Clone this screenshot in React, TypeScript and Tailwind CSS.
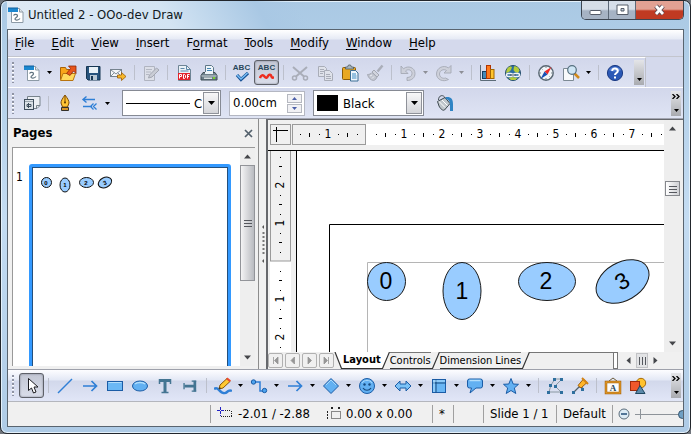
import type { ReactNode } from "react";

const BLUE = "#2f7fd6";

function Icon({ children, size = 18 }: { children: ReactNode; size?: number }) {
  return (
    <svg width={size} height={size} viewBox="0 0 18 18" fill="none" aria-hidden="true" className="shrink-0">
      {children}
    </svg>
  );
}

function ToolButton({ label, pressed, children }: { label: string; pressed?: boolean; children: ReactNode }) {
  const look = pressed
    ? "rounded-[3px] border border-[#5d6068] bg-linear-to-b from-[#c3c7d4] to-[#dadeea] shadow-[inset_0_0_2px_#777b88]"
    : "";
  return (
    <button type="button" aria-label={label} className={`flex h-[25px] w-[25px] shrink-0 items-center justify-center ${look}`}>
      {children}
    </button>
  );
}

function Drop({ label, muted }: { label: string; muted?: boolean }) {
  return (
    <button type="button" aria-label={label} className="flex h-[25px] w-[11px] shrink-0 items-center justify-center">
      <svg width="5" height="3" viewBox="0 0 5 3" aria-hidden="true">
        <path d="M0 0h5L2.5 3z" fill={muted ? "#8d8f96" : "#000"} />
      </svg>
    </button>
  );
}

function Sep() {
  return (
    <span className="flex w-2 shrink-0 justify-center">
      <span className="h-[15px] w-px bg-[#bcc0cc]" />
    </span>
  );
}

function Grip() {
  return (
    <span className="mr-[5px] ml-1 h-[21px] w-[2px] shrink-0 bg-[repeating-linear-gradient(to_bottom,#8e93a3_0_2px,#fff_2px_3px,transparent_3px_4px)]" />
  );
}

function Overflow({ chevrons }: { chevrons?: boolean }) {
  return (
    <button
      type="button"
      aria-label="Toolbar options"
      className="flex h-[25px] w-[10px] shrink-0 flex-col items-center justify-between bg-linear-to-b from-[#e4e5e8] to-[#a9abb0] pt-[3px] pb-1"
    >
      {chevrons ? (
        <svg width="8" height="5" viewBox="0 0 8 5" fill="none" stroke="#000" strokeWidth="1.3" aria-hidden="true">
          <path d="M.5 0L3 2.5.5 5M4.500 0L7 2.500 4.500 5" />
        </svg>
      ) : (
        <span />
      )}
      <svg width="5" height="3" viewBox="0 0 5 3" aria-hidden="true">
        <path d="M0 0h5L2.500 3z" />
      </svg>
    </button>
  );
}

/* ---------- toolbar drawings ---------- */

const DrawDoc = () => (
  <Icon>
    <path d="M4.500 2.500h8l3.500 3.500v10.500H4.500z" fill="#fff" stroke="#8c9aa6" />
    <path d="M12.500 2.500V6H16" fill="#e3e8ec" stroke="#8c9aa6" />
    <rect x="1" y="2" width="10" height="4" fill="#1c87cf" />
    <path d="M1 2h10" stroke="#0f5f9c" />
    <path d="M6.500 9.500c1-1.500 4-1.500 4 .3 0 1.700-2.500 1.500-2.500 3.200 0 1.500 3.500 1.500 5-.5" stroke="#60737f" strokeWidth="1.200" />
  </Icon>
);
const OpenIcon = () => (
  <Icon>
    <path d="M1.500 3.500h5l1 2h3v10h-9z" fill="#f9a51a" stroke="#a86208" />
    <path d="M1.500 16.500l2.500-7h12.500l-2.500 7z" fill="#ffd85c" stroke="#b87410" />
    <path d="M7.500 9.500l4-5L9.500 2h7.500v7.500L14.500 7l-3.500 4.500z" fill="#e8551a" stroke="#8d2a07" strokeWidth=".8" />
  </Icon>
);
const SaveIcon = () => (
  <Icon>
    <path d="M2.500 2.500h13.500v13.500h-12l-1.500-1.500z" fill="#27537c" stroke="#173652" />
    <rect x="5" y="3" width="9" height="6" fill="#e9f1f6" />
    <rect x="6" y="11" width="7" height="5" fill="#b9c8d4" />
    <rect x="7" y="12" width="2" height="4" fill="#173652" />
  </Icon>
);
const MailIcon = () => (
  <Icon>
    <rect x="1.500" y="5.500" width="11" height="7" fill="#f5f7f9" stroke="#76838e" />
    <path d="M2 6l5 4 5-4M2 12l3.500-3.500M12 12L8.500 8.500" stroke="#76838e" strokeWidth=".9" />
    <path d="M8.500 11h4V8.500l4.500 4-4.500 4V14h-4z" fill="#f8b92c" stroke="#9c5e08" strokeWidth=".8" />
  </Icon>
);
const EditIcon = () => (
  <Icon>
    <path d="M2.500 2.500h10v14h-10z" fill="#dcdfe8" stroke="#b0b4c0" />
    <path d="M4 5.500h6M4 8h5M4 10.500h3" stroke="#b4b8c3" />
    <path d="M6.500 14l1-3 7-7 2.500 2-7 7z" fill="#c9ccd5" stroke="#a3a7b2" />
  </Icon>
);
const PdfIcon = () => (
  <Icon>
    <path d="M3.500 1.500h8l4 4v11h-12z" fill="#eaf1f7" stroke="#6f8595" />
    <path d="M11.500 1.500v4h4M5.500 4.500h4M5.500 7h8" stroke="#5f89a9" />
    <rect x="3" y="9" width="12" height="7" fill="#e2232b" />
    <path d="M4.500 14.500v-4h2v2h-2M8.500 10.500v4h1l1-1v-2l-1-1zM12.500 14.500v-4h2M12.500 12.500h1.500" stroke="#fff" />
  </Icon>
);
const PrintIcon = () => (
  <Icon>
    <path d="M5.500 1.500h6l2 2v6h-8z" fill="#eef5fa" stroke="#607888" />
    <path d="M7 4.500h4M7 6.500h5" stroke="#4587b4" />
    <path d="M3 8.500h12l2 3v4.500H1v-4.500z" fill="#6d7f8a" stroke="#3f4e57" />
    <rect x="5" y="8" width="8" height="2" fill="#eef5fa" />
    <path d="M1.500 12h15" stroke="#c9d3d8" />
    <rect x="4" y="13.500" width="8" height="1.500" fill="#d6dde0" />
    <rect x="13" y="13" width="2" height="2" fill="#76d32a" />
  </Icon>
);
function AbcIcon({ wave }: { wave?: boolean }) {
  return (
    <span className="flex h-[18px] w-[18px] flex-col items-center">
      <span className="h-2 font-['Liberation_Sans'] text-[8px] leading-2 font-bold text-[#29465a]">ABC</span>
      {wave ? (
        <svg width="16" height="8" viewBox="0 0 16 8" fill="none" aria-hidden="true">
          <path d="M1 6c1-3 3-3.500 4.500-1.500s2.500 1.500 3.500-.5 3-1.500 3.500.5 1.500 1 2.500 1" stroke="#ed2d1f" strokeWidth="2.500" />
        </svg>
      ) : (
        <svg width="14" height="10" viewBox="0 0 14 10" fill="none" aria-hidden="true">
          <path d="M2 3l4 4.500L13 1" stroke="#175296" strokeWidth="3.200" />
          <path d="M2 3l4 4L12.500 1" stroke="#7cc0f7" strokeWidth="1.500" />
        </svg>
      )}
    </span>
  );
}
const CutIcon = () => (
  <Icon>
    <path d="M2 3l11 9.500M16 3L5 12.500" stroke="#a9adb8" strokeWidth="2" />
    <circle cx="3.500" cy="14" r="2" stroke="#a9adb8" strokeWidth="1.500" />
    <circle cx="14.500" cy="14" r="2" stroke="#a9adb8" strokeWidth="1.500" />
  </Icon>
);
const CopyIcon = () => (
  <Icon>
    <path d="M2.500 2.500h6l2 2v8h-8z" fill="#dfe2ea" stroke="#a9adb8" />
    <path d="M4 5.500h4M4 7.500h4M4 9.500h3" stroke="#a9adb8" />
    <path d="M8.500 6.500h5l3 3v7h-8z" fill="#dfe2ea" stroke="#a9adb8" />
    <path d="M10 10.500h4M10 12.500h5M10 14.500h5" stroke="#a9adb8" />
  </Icon>
);
const PasteIcon = () => (
  <Icon>
    <rect x="1.500" y="3.500" width="13" height="12" rx="1" fill="#e9a822" stroke="#8c5c08" />
    <path d="M4.500 5V3h2l1-2h2l1 2h2v2z" fill="#a8b5bd" stroke="#4d5a62" strokeWidth=".8" />
    <path d="M9.500 6.500h5l2.500 2.500v8h-7.500z" fill="#eef6fc" stroke="#3d6f96" />
    <path d="M11 10h4M11 12h4.500M11 14h4.500" stroke="#3b8ac4" />
  </Icon>
);
const BrushIcon = () => (
  <Icon>
    <path d="M16.500 1.500l-5 6" stroke="#aaaeb9" strokeWidth="2.500" />
    <path d="M8 6l5 5-2 2-5-5z" fill="#d1d4dd" stroke="#a4a8b3" />
    <path d="M6 8.500C5 10 3 10.500 1.500 10.500c1 3.500 3 5.500 6 6 2-.5 3-2 3.500-3.500z" fill="#c2c6d0" stroke="#a4a8b3" />
    <path d="M4 12l2-1M6 14.500l2-2" stroke="#eceef4" />
  </Icon>
);
const UndoIcon = () => (
  <Icon>
    <path d="M2 2v7.500h7L6.500 7C9 4.500 13 6 13 9.500c0 2.500-2 4-5 4v3c5 0 8-3 8-7C16 3.500 9 1 4.500 4.800z" fill="#cdd0da" stroke="#a5a9b4" strokeWidth=".9" />
  </Icon>
);
const RedoIcon = () => (
  <Icon>
    <path d="M16 1.500V9H9l2.500-2.500C8.500 4.500 4.500 6.500 4.500 10c0 3 3 5 6 4l3 1.500C8 18.500 1.500 15.500 1.500 10 1.500 3.500 9 .5 13.500 4z" fill="#cdd0da" stroke="#a5a9b4" strokeWidth=".9" />
  </Icon>
);
const ChartIcon = () => (
  <Icon>
    <path d="M1.500 1v15.500H17" stroke="#5c6c78" />
    <rect x="3.500" y="7.500" width="4" height="7" fill="#4489b8" stroke="#153f62" />
    <rect x="7.500" y="1.500" width="4" height="13" fill="#ff7a1c" stroke="#b13400" />
    <rect x="11.500" y="5.500" width="3.500" height="9" fill="#ffc42d" stroke="#a36700" />
  </Icon>
);
const GlobeIcon = () => (
  <Icon>
    <circle cx="9" cy="9" r="7.500" fill="#2c6ea1" stroke="#254e6c" />
    <path d="M3 5c2-3 4-3 5-2l-1 3-2 2-3 1zM10 2.500c3-1 5 2 5.500 4L14 9l-3-1-1.500-2zM4.500 14l4-1 5 1-2 2H7z" fill="#b5cc3a" />
    <rect x="2.500" y="9.500" width="6" height="3" rx="1.500" stroke="#f2f4f5" strokeWidth="1.500" />
    <rect x="9.500" y="9.500" width="6" height="3" rx="1.500" stroke="#f2f4f5" strokeWidth="1.500" />
    <path d="M6 11h6" stroke="#4a575f" />
  </Icon>
);
const CompassIcon = () => (
  <Icon>
    <circle cx="9" cy="9" r="7.200" fill="#f2f5f8" stroke="#596773" strokeWidth="1.400" />
    <path d="M9 2v2M9 14v2M2 9h2M14 9h2M4.500 4.500l1 1M12.500 12.500l1 1" stroke="#7b8790" />
    <path d="M14.500 3L7.500 7.500l3 3z" fill="#ee2a2a" />
    <path d="M3.500 15l7-4.500-3-3z" fill="#1850b4" />
  </Icon>
);
const FindIcon = () => (
  <Icon>
    <path d="M1.500 4.500h10v12h-10z" fill="#f8fafb" stroke="#7d8a94" />
    <path d="M12.500 9.500l4.500 4.500" stroke="#d18a1a" strokeWidth="2.500" />
    <circle cx="10" cy="6" r="4.300" fill="#cfe6f5" stroke="#56707f" strokeWidth="1.200" />
  </Icon>
);
const HelpIcon = () => (
  <Icon>
    <circle cx="9" cy="9" r="7.600" fill="#2a58b5" stroke="#1c3c85" />
    <path d="M3 6c2-4 10-4 12 0-2 2-10 2-12 0z" fill="#5580d2" />
    <path d="M6.200 7c0-3.500 5.600-3.300 5.600 0 0 2-2.800 2-2.800 4" stroke="#fff" strokeWidth="2" />
    <rect x="8" y="12.500" width="2" height="2" fill="#fff" />
  </Icon>
);
const StylesIcon = () => (
  <Icon>
    <path d="M4.500 2.500h12.500v9l-3 3h-9.500z" fill="#eceff4" stroke="#78838c" />
    <path d="M13.500 14.500v-3H17" stroke="#78838c" />
    <rect x="1.500" y="5.500" width="9" height="10" fill="#dce2e8" stroke="#3f4e5c" />
    <path d="M2 7.500h8" stroke="#9aa5ae" />
    <path d="M5.500 9v5M4 10.500h4v2H4z" stroke="#3f4e5c" />
  </Icon>
);
const NibIcon = () => (
  <Icon>
    <path d="M9 1c3 4 4 6 4 8l-1.500 4h-5L5 9c0-2 1-4 4-8z" fill="#ffc435" stroke="#7d4a04" />
    <path d="M9 2v6" stroke="#7d4a04" />
    <circle cx="9" cy="8.500" r="1" fill="#5a3502" />
    <path d="M5.500 13.500h7v3h-7z" fill="#d8952a" stroke="#33302a" />
  </Icon>
);
const LineEndsIcon = () => (
  <Icon>
    <path d="M2 5.500h12M5.500 2.500L2 5.500l3.500 3" stroke={BLUE} strokeWidth="1.400" />
    <path d="M2 12.500h9M12.500 9.500l-3 3 3 3M15.500 9.500l-3 3 3 3" stroke={BLUE} strokeWidth="1.300" />
  </Icon>
);
const BucketIcon = () => (
  <Icon>
    <path d="M1.500 7.500L9 3.500l5 6-5.500 6.500c-1.500 1-4-1-5.500-4z" fill="#bfc6cb" stroke="#3f4a51" />
    <path d="M3 7.500l6 6M6 6l5.500 5.500" stroke="#fff" />
    <path d="M2.500 6c0-5 5-6 7-1.500" stroke="#3f4a51" />
    <path d="M10 3c5-.5 7 2 7 7v7h-3v-6.500C14 7 12.500 5.500 9.500 5z" fill="#2f84c4" />
  </Icon>
);
const CursorIcon = () => (
  <Icon>
    <path d="M5.500 1.500v12l3-2.500 2 5 2.500-1-2-5h4z" fill="#fff" stroke="#1c1c20" />
  </Icon>
);
const LineIcon = () => (
  <Icon>
    <path d="M2 16L16 2" stroke={BLUE} strokeWidth="1.500" />
  </Icon>
);
const ArrowIcon = () => (
  <Icon>
    <path d="M2 9h13M10.500 4L15.500 9l-5 5" stroke={BLUE} strokeWidth="1.700" />
  </Icon>
);
const RectIcon = () => (
  <Icon>
    <rect x="1.500" y="4.500" width="15" height="9" fill="#6bb8f5" stroke="#1b5ca6" />
    <path d="M2.500 5.500h13" stroke="#b2defc" />
  </Icon>
);
const EllipseIcon = () => (
  <Icon>
    <ellipse cx="9" cy="9" rx="7.500" ry="5" fill="#62b0f2" stroke="#1b5ca6" />
    <path d="M4 7c2-2 8-2 10 0" stroke="#b2defc" strokeWidth="1.500" />
  </Icon>
);
function TextIcon({ vertical }: { vertical?: boolean }) {
  return (
    <Icon>
      <g transform={vertical ? "rotate(90 9 9) translate(1 1) scale(.9)" : undefined}>
        <path d="M3 3.500h12M9 3v12" stroke="#447592" strokeWidth="3" />
        <path d="M3.500 2v5M14.500 2v5M5.500 15.500h7" stroke="#447592" strokeWidth="1.500" />
      </g>
    </Icon>
  );
}
const PencilIcon = () => (
  <Icon>
    <path d="M0 12c3-2 4 0 6 2s5 3 7 1 3-2 5-1" stroke={BLUE} strokeWidth="2.500" />
    <path d="M5 12l1-4 7-6.500 3 3-7 6.500z" fill="#ffc831" stroke="#885507" />
    <path d="M12 2l1.500-1.500 3.500 3L15.500 5z" fill="#eb4a30" />
    <path d="M5 12l.7-2L7 11.300z" fill="#222" />
  </Icon>
);
const ConnectorIcon = () => (
  <Icon>
    <path d="M4 5h6v9h5" stroke={BLUE} strokeWidth="1.500" />
    <circle cx="3.500" cy="5" r="2.200" fill="#4da3ee" stroke="#1b5ca6" />
    <circle cx="14.500" cy="13.500" r="2.200" fill="#4da3ee" stroke="#1b5ca6" />
  </Icon>
);
const DiamondIcon = () => (
  <Icon>
    <path d="M9 1.500L16.500 9 9 16.500 1.500 9z" fill="#62b0f2" stroke="#1b5ca6" />
    <path d="M4 8l5-5 5 5" stroke="#a7d8fb" />
  </Icon>
);
const SmileyIcon = () => (
  <Icon>
    <circle cx="9" cy="9" r="7.500" fill="#62b0f2" stroke="#1b5ca6" />
    <path d="M4 6c2-3.500 8-3.500 10 0" stroke="#a7d8fb" />
    <circle cx="6.500" cy="7.500" r="1.200" fill="#15497f" />
    <circle cx="11.500" cy="7.500" r="1.200" fill="#15497f" />
    <path d="M5 11c2 3 6 3 8 0" stroke="#15497f" strokeWidth="1.200" />
  </Icon>
);
const BlockArrowIcon = () => (
  <Icon>
    <path d="M1 9l5-5v3h6V4l5 5-5 5v-3H6v3z" fill="#7cc2f7" stroke="#1b5ca6" />
  </Icon>
);
const FlowIcon = () => (
  <Icon>
    <rect x="2.500" y="2.500" width="13" height="13" fill="#69b6f4" stroke="#1b5ca6" />
    <path d="M6 2.500v13M2.500 6h13" stroke="#15497f" />
    <path d="M4 3v12M3 4h12" stroke="#b2defc" />
  </Icon>
);
const CalloutIcon = () => (
  <Icon>
    <path d="M3.500 2h11q2 0 2 2v5q0 2-2 2H10l-6 5 1.500-5h-2q-2 0-2-2V4q0-2 2-2z" fill="#62b0f2" stroke="#1b5ca6" />
    <path d="M3.500 3.500h11" stroke="#b2defc" strokeWidth="1.500" />
  </Icon>
);
const StarIcon = () => (
  <Icon>
    <path d="M9 1.500l2.200 5.500 5.300.3-4.200 3.700 1.500 5.500L9 13.500l-4.800 3 1.500-5.500L1.500 7.300 6.800 7z" fill="#62b0f2" stroke="#1b5ca6" />
  </Icon>
);
const PointsIcon = () => (
  <Icon>
    <path d="M3 15L5 8l4-6h7L9 9l6 6H3" stroke="#8a98a2" />
    {[[1, 14], [3, 7], [7, 1], [14, 1], [8, 8], [14, 14]].map(([x, y]) => (
      <rect key={`${x}-${y}`} x={x} y={y} width="3" height="3" fill="#2e6f9e" />
    ))}
  </Icon>
);
const GlueIcon = () => (
  <Icon>
    <path d="M3 15l5-5 4 1" stroke="#51616c" strokeWidth="1.200" />
    <path d="M7 8.500L12.500 2 16 5.500 10 11z" fill="#ffb52a" stroke="#a3600a" />
    <path d="M11 1l6 6" stroke="#d28216" strokeWidth="2" />
    <rect x="1" y="14" width="3" height="3" fill="#2e6f9e" />
    <rect x="10" y="11" width="3" height="3" fill="#2e6f9e" />
  </Icon>
);
const FontworkIcon = () => (
  <Icon>
    <path d="M5 4l4-3 4 3" stroke="#6a5a3b" />
    <rect x="2" y="5" width="14" height="11" fill="#fdfdfd" stroke="#a8650c" strokeWidth="2.500" />
    <rect x="2" y="5" width="14" height="11" stroke="#f0a62e" />
    <text x="9" y="14" textAnchor="middle" fontSize="9" fontWeight="bold" fontFamily="Liberation Serif, serif" fill="#27485f">A</text>
  </Icon>
);
const GalleryIcon = () => (
  <Icon>
    <circle cx="12" cy="6" r="4.700" fill="#ffc22e" stroke="#a86b08" />
    <rect x="1.500" y="4.500" width="9" height="9" fill="#f0582b" stroke="#9e2c0b" />
    <path d="M11 8.500l5 8H6.500z" fill="#5b89a9" stroke="#1f4760" />
  </Icon>
);

/* ---------- ruler ---------- */

const CM = 38;

function ticks(from: number, to: number, origin: number) {
  const out: { pos: number; kind: "dot" | "bar" | "num"; value: number }[] = [];
  for (let q = -12; q <= 40; q++) {
    const pos = origin + (q * CM) / 4;
    if (q === 0 || pos < from || pos > to) continue;
    out.push({ pos: Math.round(pos), kind: q % 4 === 0 ? "num" : q % 2 === 0 ? "bar" : "dot", value: Math.abs(q / 4) });
  }
  return out;
}

function HorizontalRuler() {
  return (
    <svg width="100%" height="21" className="block bg-white" aria-hidden="true">
      <rect x=".5" y=".5" width="73" height="20" fill="#f0f0f0" stroke="#9a9a9a" />
      {ticks(5, 372, 74).map((t) =>
        t.kind === "num" ? (
          <text key={t.pos} x={t.pos} y="14" textAnchor="middle" fontSize="12">{t.value}</text>
        ) : (
          <rect key={t.pos} x={t.pos} y={t.kind === "bar" ? 9 : 10} width="1" height={t.kind === "bar" ? 4 : 1} />
        ),
      )}
    </svg>
  );
}

function VerticalRuler() {
  return (
    <svg width="21" height="100%" className="block bg-white" aria-hidden="true">
      <rect x=".5" y="-1" width="20" height="111" fill="#f0f0f0" stroke="#9a9a9a" />
      {ticks(4, 200, 110).map((t) =>
        t.kind === "num" ? (
          <text key={t.pos} transform={`translate(14 ${t.pos}) rotate(-90)`} textAnchor="middle" fontSize="12">{t.value}</text>
        ) : (
          <rect key={t.pos} y={t.pos} x={t.kind === "bar" ? 9 : 10} height="1" width={t.kind === "bar" ? 3 : 1} />
        ),
      )}
    </svg>
  );
}

/* ---------- page content ---------- */

function Page() {
  return (
    <svg width="100%" height="100%" className="block" role="img" aria-label="Drawing page">
      <path d="M32.500 2000V73.500H3000" fill="none" stroke="#000" />
      <path d="M70.500 2000V111.500H3000" fill="none" stroke="#b5b5b5" />
      <g fill="#99ccff" stroke="#1a1a1a">
        <circle cx="89.500" cy="130.500" r="19" />
        <ellipse cx="165" cy="140" rx="19" ry="28.500" />
        <ellipse cx="250" cy="130.500" rx="28.500" ry="19" />
        <ellipse cx="325.500" cy="130.500" rx="28.500" ry="19" transform="rotate(-30 325.500 130.500)" />
      </g>
      <g fontFamily="Liberation Sans, Arial, sans-serif" fontSize="23" textAnchor="middle">
        <text x="89" y="138">0</text>
        <text x="165" y="148">1</text>
        <text x="249" y="138">2</text>
        <text x="325" y="138" transform="rotate(-30 325 130)">3</text>
      </g>
    </svg>
  );
}

function Thumbnail() {
  return (
    <svg width="100%" height="100%" className="block" role="img" aria-label="Page 1">
      <g fill="#99ccff" stroke="#111" strokeWidth="1">
        <circle cx="13.500" cy="14.500" r="5" />
        <ellipse cx="32" cy="17" rx="5" ry="7" />
        <ellipse cx="53.500" cy="14.500" rx="7" ry="5" />
        <ellipse cx="72" cy="14.500" rx="7" ry="5" transform="rotate(-25 72 14.500)" />
      </g>
      <g fontFamily="Liberation Sans, Arial, sans-serif" fontSize="6" fontWeight="bold" textAnchor="middle">
        <text x="13" y="17">0</text>
        <text x="32" y="19">1</text>
        <text x="53" y="17">2</text>
        <text x="72" y="17" transform="rotate(-25 72 15)">3</text>
      </g>
    </svg>
  );
}

/* ---------- window parts ---------- */

function TitleBar() {
  return (
    <header className="flex h-[28px] shrink-0 items-start bg-[linear-gradient(60deg,#dfeaf5_0%,#d3e4f3_24%,#a9c8e4_38%,transparent_44%,transparent_100%)]">
      <h1 className="flex flex-1 items-center gap-[3px] pt-[5px] text-[13px] leading-[18px] text-[#101820]">
        <DrawDoc />
        Untitled 2 - OOo-dev Draw
      </h1>
      <div className="flex h-[19px] overflow-hidden rounded-b-[5px] border border-t-0 border-[#3d4652]">
        <button type="button" aria-label="Minimize" className="flex w-[27px] items-center justify-center border-r border-[#5d6978] bg-linear-to-b from-[#d6dee8] from-45% to-[#a6b3c4] to-55%">
          <svg width="13" height="12" aria-hidden="true"><rect x="1" y="6.500" width="11" height="4" rx="1" fill="#fff" stroke="#555c68" /></svg>
        </button>
        <button type="button" aria-label="Maximize" className="flex w-[27px] items-center justify-center border-r border-[#5d6978] bg-linear-to-b from-[#d6dee8] from-45% to-[#a6b3c4] to-55%">
          <svg width="13" height="12" aria-hidden="true"><path fillRule="evenodd" d="M1 1h11v9.500H1zM5 4.500v2.500h3V4.500z" fill="#fff" stroke="#555c68" /></svg>
        </button>
        <button type="button" aria-label="Close" className="flex w-[47px] items-center justify-center bg-linear-to-b from-[#e2a193] from-45% to-[#c03a22] to-55%">
          <svg width="13" height="12" fill="none" aria-hidden="true">
            <path d="M3 2l7 8M10 2l-7 8" stroke="#5b4a52" strokeWidth="4.500" />
            <path d="M3 2l7 8M10 2l-7 8" stroke="#fff" strokeWidth="2.700" />
          </svg>
        </button>
      </div>
    </header>
  );
}

const MENUS: [string, string, string][] = [
  ["", "F", "ile"],
  ["", "E", "dit"],
  ["", "V", "iew"],
  ["", "I", "nsert"],
  ["F", "o", "rmat"],
  ["", "T", "ools"],
  ["", "M", "odify"],
  ["", "W", "indow"],
  ["", "H", "elp"],
];

function MenuBar() {
  return (
    <nav className="flex h-[26px] shrink-0 items-center gap-[17px] bg-[linear-gradient(to_bottom,#fff,#e6eaf5_9px,#d4d9ec_10px)] px-[7px] text-[13px]">
      {MENUS.map(([a, u, b]) => (
        <button key={u + b} type="button" className="leading-5">
          {a}
          <u className="underline-offset-2">{u}</u>
          {b}
        </button>
      ))}
    </nav>
  );
}

function StandardBar() {
  return (
    <div className="flex h-[31px] shrink-0 border-t border-[#c3c5cd] bg-[#d4d9ec]">
      <div className="flex items-center border-t border-r border-t-white border-r-[#bfc1c9] bg-linear-to-b from-[#d2d7eb] to-[#dde2f2] pr-px">
        <Grip />
        <ToolButton label="New"><DrawDoc /></ToolButton>
        <Drop label="New document types" />
        <ToolButton label="Open"><OpenIcon /></ToolButton>
        <ToolButton label="Save"><SaveIcon /></ToolButton>
        <ToolButton label="E-mail"><MailIcon /></ToolButton>
        <Sep />
        <ToolButton label="Edit file"><EditIcon /></ToolButton>
        <Sep />
        <ToolButton label="Export as PDF"><PdfIcon /></ToolButton>
        <ToolButton label="Print"><PrintIcon /></ToolButton>
        <Sep />
        <ToolButton label="Spelling"><AbcIcon /></ToolButton>
        <ToolButton label="AutoSpellcheck" pressed><AbcIcon wave /></ToolButton>
        <Sep />
        <ToolButton label="Cut"><CutIcon /></ToolButton>
        <ToolButton label="Copy"><CopyIcon /></ToolButton>
        <ToolButton label="Paste"><PasteIcon /></ToolButton>
        <ToolButton label="Format paintbrush"><BrushIcon /></ToolButton>
        <Sep />
        <ToolButton label="Undo"><UndoIcon /></ToolButton>
        <Drop label="Undo list" muted />
        <ToolButton label="Redo"><RedoIcon /></ToolButton>
        <Drop label="Redo list" muted />
        <Sep />
        <ToolButton label="Chart"><ChartIcon /></ToolButton>
        <ToolButton label="Hyperlink"><GlobeIcon /></ToolButton>
        <Sep />
        <ToolButton label="Navigator"><CompassIcon /></ToolButton>
        <ToolButton label="Zoom"><FindIcon /></ToolButton>
        <Drop label="Zoom levels" />
        <Sep />
        <ToolButton label="Help"><HelpIcon /></ToolButton>
        <span className="w-[7px]" />
        <Overflow />
      </div>
    </div>
  );
}

function SelectArrow() {
  return (
    <span className="pointer-events-none absolute top-px right-px bottom-px flex w-4 items-center justify-center border border-[#8f9299] bg-linear-to-b from-[#f7f7f8] to-[#d5d6da]">
      <svg width="7" height="4" viewBox="0 0 7 4" aria-hidden="true"><path d="M0 0h7L3.500 4z" /></svg>
    </span>
  );
}

function LineBar() {
  return (
    <div className="flex h-8 shrink-0 items-center border-t border-b border-t-white border-b-[#a3a6b2] bg-linear-to-b from-[#d2d7eb] to-[#dfe4f4] pr-[2px]">
      <Grip />
      <ToolButton label="Styles and formatting"><StylesIcon /></ToolButton>
      <Sep />
      <ToolButton label="Line"><NibIcon /></ToolButton>
      <ToolButton label="Arrow style"><LineEndsIcon /></ToolButton>
      <Drop label="Arrow styles" />
      <div className="relative ml-[9px] h-[26px] w-[99px] border border-[#868a94] bg-white">
        <select aria-label="Line style" className="h-full w-full appearance-none bg-transparent pr-[18px] pl-[71px] text-[13px]">
          <option>Continuous</option>
        </select>
        <span className="pointer-events-none absolute top-3 left-[3px] h-px w-[64px] bg-black" />
        <SelectArrow />
      </div>
      <div className="ml-2 flex h-[25px] w-[76px] items-center border border-[#b4b7c2] bg-white pr-[2px]">
        <input aria-label="Line width" defaultValue="0.00cm" className="w-0 flex-1 pl-[3px] text-[13px]" />
        <span className="flex w-[15px] flex-col gap-px">
          <button type="button" aria-label="Increase width" className="flex h-[9px] items-center justify-center border border-[#b5b8c0] bg-[#f1f1f4]">
            <svg width="5" height="3" aria-hidden="true"><path d="M0 3h5L2.500 0z" fill="#4b5fa8" /></svg>
          </button>
          <button type="button" aria-label="Decrease width" className="flex h-[9px] items-center justify-center border border-[#b5b8c0] bg-[#f1f1f4]">
            <svg width="5" height="3" aria-hidden="true"><path d="M0 0h5L2.500 3z" fill="#4b5fa8" /></svg>
          </button>
        </span>
      </div>
      <div className="relative ml-2 h-[26px] w-[111px] border border-[#868a94] bg-white">
        <select aria-label="Line color" className="h-full w-full appearance-none bg-transparent pr-[18px] pl-[29px] text-[13px]">
          <option>Black</option>
        </select>
        <span className="pointer-events-none absolute top-1 left-[3px] h-4 w-[21px] bg-black" />
        <SelectArrow />
      </div>
      <span className="w-2" />
      <ToolButton label="Area"><BucketIcon /></ToolButton>
      <span className="flex-1" />
      <Overflow chevrons />
    </div>
  );
}

function ScrollTip({ dir }: { dir: "up" | "down" | "left" | "right" }) {
  const d = { up: "M0 5.500h7L3.500 1.500z", down: "M0 1.500h7L3.500 5.500z", left: "M5.500 0v7L1.500 3.500z", right: "M1.500 0v7L5.500 3.500z" }[dir];
  return (
    <button type="button" aria-label={`Scroll ${dir}`} className="flex h-[17px] w-[15px] shrink-0 items-center justify-center">
      <svg width="7" height="7" viewBox="0 0 7 7" aria-hidden="true"><path d={d} fill="#44464a" /></svg>
    </button>
  );
}

function Notches({ upright }: { upright?: boolean }) {
  return (
    <svg width="8" height="8" viewBox="0 0 8 8" aria-hidden="true">
      <path d={upright ? "M1.500 0v8M4.500 0v8M7.500 0v8" : "M0 1.500h8M0 4.500h8M0 7.500h8"} stroke="#55585e" />
    </svg>
  );
}

function PagesPanel() {
  return (
    <aside className="flex w-[250px] shrink-0 flex-col bg-[#f0f0f0] pl-1">
      <div className="flex h-7 shrink-0 items-center justify-between pr-[5px]">
        <h2 className="pl-px text-[13px] font-bold">Pages</h2>
        <button type="button" aria-label="Close pane">
          <svg width="9" height="9" viewBox="0 0 9 9" aria-hidden="true"><path d="M1 1l7 7M8 1L1 8" stroke="#53606c" strokeWidth="1.700" /></svg>
        </button>
      </div>
      <div className="mr-[3px] mb-[3px] flex min-h-0 flex-1 border-t border-l border-[#999]">
        <div className="flex min-w-0 flex-1 overflow-hidden bg-white pt-4 pr-[9px]">
          <span className="w-4 shrink-0 pt-[5px] pl-[3px] text-[12px] leading-4">1</span>
          <div className="h-[290px] flex-1 rounded-[3px] border-[3px] border-[#3399ff] bg-white">
            <div className="h-full border border-[#234f7c]">
              <Thumbnail />
            </div>
          </div>
        </div>
        <div className="flex w-[15px] shrink-0 flex-col items-center bg-[#eeeeee]">
          <ScrollTip dir="up" />
          <div className="flex h-[116px] w-[15px] items-center justify-center border border-[#929499] bg-linear-to-r from-[#f4f4f5] to-[#b9bbc0]">
            <Notches />
          </div>
          <span className="flex-1" />
          <ScrollTip dir="down" />
        </div>
      </div>
    </aside>
  );
}

const NAV: [string, string][] = [
  ["First", "M2.500 1v7M7 1v7L3.500 4.500z"],
  ["Previous", "M6.500 1v7L3 4.500z"],
  ["Next", "M3 1v7L6.500 4.500z"],
  ["Last", "M6.500 1v7M2 1v7L5.500 4.500z"],
];

function Slash({ left, right }: { left: string; right: string }) {
  return (
    <svg width="9" height="17" viewBox="0 0 9 17" className="shrink-0" aria-hidden="true">
      <path d="M0 0h8.500L1.500 16.500H0z" fill={left} />
      <path d="M8.500 0H9v17H1.500z" fill={right} />
      <path d="M8.500 0L1.500 16.500H0" fill="none" stroke="#333" strokeWidth="1.200" />
    </svg>
  );
}

function BottomStrip() {
  return (
    <div className="flex h-[17px] shrink-0 items-stretch bg-[#f0f0f0] text-[11px]">
      <div className="flex items-center gap-[2px]">
        {NAV.map(([label, d]) => (
          <button key={label} type="button" aria-label={`${label} layer`} className="flex h-[15px] w-[15px] items-center justify-center rounded-[2px] border border-[#b1b1b1]">
            <svg width="9" height="9" viewBox="0 0 9 9" aria-hidden="true"><path d={d} fill="#969696" stroke="#969696" strokeWidth=".8" /></svg>
          </button>
        ))}
      </div>
      <svg width="9" height="17" viewBox="0 0 9 17" className="shrink-0" aria-hidden="true">
        <path d="M1 0h8v16.500H7.500z" fill="#fff" />
        <path d="M1 0l6.500 16.500H9" fill="none" stroke="#333" strokeWidth="1.200" />
      </svg>
      <button type="button" className="border-b border-[#333] bg-white font-bold leading-4">Layout</button>
      <Slash left="#fff" right="#f0f0f0" />
      <button type="button" className="border-t border-b border-[#333] border-t-[#777] leading-4">Controls</button>
      <Slash left="#f0f0f0" right="#f0f0f0" />
      <button type="button" className="border-t border-b border-[#333] border-t-[#777] leading-4">Dimension Lines</button>
      <Slash left="#f0f0f0" right="#f0f0f0" />
      <span className="flex-1 border-t border-[#777]" />
      <span className="w-[5px] border border-[#777] bg-white" />
      <div className="flex items-center pl-[3px]">
        <ScrollTip dir="left" />
        <span className="flex h-[15px] w-[12px] items-center justify-center border border-[#c2c3c6] bg-[#e2e3e5]"><Notches upright /></span>
        <ScrollTip dir="right" />
      </div>
      <span className="w-5" />
    </div>
  );
}

function Editor() {
  return (
    <section className="flex min-w-0 flex-1 flex-col border-t border-l-2 border-[#66686c] bg-[#f0f0f0]">
      <div className="flex min-h-0 flex-1">
        <div className="flex min-w-0 flex-1 flex-col">
          <div className="flex h-[30px] shrink-0 gap-px pt-1 pl-[2px]">
            <svg width="21" height="21" viewBox="0 0 21 21" className="shrink-0" aria-hidden="true">
              <rect x=".5" y=".5" width="20" height="20" fill="#f0f0f0" stroke="#9a9a9a" />
              <path d="M3 6.500h15M6.500 3v15" stroke="#000" />
            </svg>
            <div className="min-w-0 flex-1"><HorizontalRuler /></div>
          </div>
          <div className="flex min-h-0 flex-1">
            <div className="w-[28px] shrink-0 border-t border-black pl-[2px]"><VerticalRuler /></div>
            <div className="min-w-0 flex-1 border-t border-l border-black bg-white"><Page /></div>
          </div>
        </div>
        <div className="flex w-[19px] shrink-0 flex-col items-center bg-[#eeeeee] pr-[2px]">
          <ScrollTip dir="up" />
          <span className="h-[44px]" />
          <div className="flex h-[15px] w-[15px] items-center justify-center border border-[#85878c] bg-linear-to-r from-white to-[#cfd0d4]"><Notches /></div>
          <span className="flex-1" />
          <ScrollTip dir="down" />
        </div>
      </div>
      <BottomStrip />
    </section>
  );
}

function DrawingBar() {
  return (
    <div className="flex h-8 shrink-0 items-center border-t border-[#9ea1ab] bg-[linear-gradient(to_bottom,#fdfdff,#e3e8f5_10px,#d2d8eb_11px,#e1e6f7)] pr-[2px]">
      <Grip />
      <ToolButton label="Select" pressed><CursorIcon /></ToolButton>
      <Sep />
      <ToolButton label="Line"><LineIcon /></ToolButton>
      <ToolButton label="Line with arrow"><ArrowIcon /></ToolButton>
      <ToolButton label="Rectangle"><RectIcon /></ToolButton>
      <ToolButton label="Ellipse"><EllipseIcon /></ToolButton>
      <ToolButton label="Text"><TextIcon /></ToolButton>
      <ToolButton label="Vertical text"><TextIcon vertical /></ToolButton>
      <Sep />
      <ToolButton label="Curve"><PencilIcon /></ToolButton>
      <Drop label="Curves" />
      <ToolButton label="Connector"><ConnectorIcon /></ToolButton>
      <Drop label="Connectors" />
      <ToolButton label="Arrow"><ArrowIcon /></ToolButton>
      <Drop label="Arrows" />
      <ToolButton label="Basic shape"><DiamondIcon /></ToolButton>
      <Drop label="Basic shapes" />
      <ToolButton label="Symbol shape"><SmileyIcon /></ToolButton>
      <Drop label="Symbol shapes" />
      <ToolButton label="Block arrow"><BlockArrowIcon /></ToolButton>
      <Drop label="Block arrows" />
      <ToolButton label="Flowchart"><FlowIcon /></ToolButton>
      <Drop label="Flowcharts" />
      <ToolButton label="Callout"><CalloutIcon /></ToolButton>
      <Drop label="Callouts" />
      <ToolButton label="Star"><StarIcon /></ToolButton>
      <Drop label="Stars" />
      <Sep />
      <ToolButton label="Points"><PointsIcon /></ToolButton>
      <ToolButton label="Glue points"><GlueIcon /></ToolButton>
      <Sep />
      <ToolButton label="Fontwork"><FontworkIcon /></ToolButton>
      <ToolButton label="Gallery"><GalleryIcon /></ToolButton>
      <span className="flex-1" />
      <Overflow chevrons />
    </div>
  );
}

function StatusBar() {
  const cell = "flex items-center border-l border-[#a0a0a0]";
  return (
    <footer className="flex h-[25px] shrink-0 overflow-hidden border-t border-[#b4b6bd] bg-[#f0f0f0] py-[3px] text-[13px] whitespace-nowrap">
      <span className="w-[202px] shrink-0" />
      <span className={`${cell} w-[222px] shrink-0 pl-[6px]`}>
        <svg width="16" height="14" viewBox="0 0 16 14" className="mr-[5px]" fill="none" aria-hidden="true">
          <path d="M8 3.500h6M4 9.500h11M14.500 4v6" stroke="#222" strokeDasharray="1 1" />
          <path d="M0 3.500h8M3.500 0v9" stroke="#2222c4" strokeDasharray="3 1" />
        </svg>
        <span className="w-[88px]">-2.01 / -2.88</span>
        <svg width="16" height="14" viewBox="0 0 16 14" className="mr-1" fill="none" aria-hidden="true">
          <path d="M5.500 4.500h9v7h-9z" stroke="#222" strokeDasharray="1 1" />
          <path d="M1.500 4v8" stroke="#222" strokeDasharray="2 1" />
          <path d="M5 0l2 2M7 0L5 2M12 0l2 2M14 0l-2 2" stroke="#222" />
        </svg>
        0.00 x 0.00
      </span>
      <span className={`${cell} w-[21px] shrink-0 pl-[6px]`}>*</span>
      <span className={`${cell} w-[30px] shrink-0`} />
      <span className={`${cell} w-[73px] shrink-0 pl-[6px]`}>Slide 1 / 1</span>
      <span className={`${cell} w-[56px] shrink-0 pl-[6px]`}>Default</span>
      <span className={`${cell} relative min-w-0 flex-1 overflow-hidden pl-[5px]`}>
        <button type="button" aria-label="Zoom out" className="mr-[5px] shrink-0">
          <svg width="12" height="12" viewBox="0 0 12 12" aria-hidden="true">
            <circle cx="6" cy="6" r="5" fill="#dcebf5" stroke="#5b6d7b" />
            <path d="M3 6h6" stroke="#234e77" strokeWidth="1.500" />
          </svg>
        </button>
        <input
          type="range"
          aria-label="Zoom"
          defaultValue="50"
          className="h-3 w-[94px] shrink-0 appearance-none bg-[linear-gradient(#8d9399,#8d9399)] bg-[length:100%_1px] bg-center bg-no-repeat [&::-webkit-slider-thumb]:h-[9px] [&::-webkit-slider-thumb]:w-[9px] [&::-webkit-slider-thumb]:appearance-none [&::-webkit-slider-thumb]:rounded-full [&::-webkit-slider-thumb]:border [&::-webkit-slider-thumb]:border-[#35556f] [&::-webkit-slider-thumb]:bg-[#6fa0c4]"
        />
        <span className="pointer-events-none absolute top-1 left-[27px] h-[10px] w-px bg-[#8d9399]" />
      </span>
    </footer>
  );
}

export default function App() {
  return (
    <div className="flex h-screen flex-col overflow-hidden bg-[#70757c] font-['DejaVu_Sans_Condensed','DejaVu_Sans',sans-serif] text-black">
      <div className="flex min-h-0 flex-1 flex-col rounded-[7px] border border-[#22262c] bg-linear-to-b from-[#aac9e4] via-[#c4dcf2] to-[#aecbe6] px-[6px] pb-[6px] shadow-[inset_0_0_0_1px_#e4f1fb]">
        <TitleBar />
        <div className="flex min-h-0 flex-1 flex-col border border-[#59646f] bg-[#f0f0f0]">
          <MenuBar />
          <StandardBar />
          <LineBar />
          <main className="flex min-h-0 flex-1">
            <PagesPanel />
            <div className="flex w-2 shrink-0 flex-col items-center justify-center border-l border-[#8c8c8c] bg-[#f0f0f0]">
              <svg width="4" height="38" viewBox="0 0 4 38" aria-hidden="true">
                <path d="M3 0v4L1 2zM3 34v4L1 36z" fill="#555" />
                <path d="M2.500 7v24" stroke="#777" strokeWidth="2" strokeDasharray="2 2" />
              </svg>
            </div>
            <Editor />
          </main>
          <DrawingBar />
          <StatusBar />
        </div>
      </div>
    </div>
  );
}
